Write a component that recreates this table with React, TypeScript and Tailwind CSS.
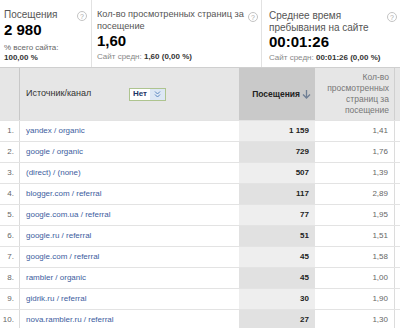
import React from "react";

const rows = [
  { source: "yandex / organic", visits: "1 159", pages: "1,41" },
  { source: "google / organic", visits: "729", pages: "1,76" },
  { source: "(direct) / (none)", visits: "507", pages: "1,39" },
  { source: "blogger.com / referral", visits: "117", pages: "2,89" },
  { source: "google.com.ua / referral", visits: "77", pages: "1,95" },
  { source: "google.ru / referral", visits: "51", pages: "1,51" },
  { source: "google.com / referral", visits: "45", pages: "1,58" },
  { source: "rambler / organic", visits: "45", pages: "1,00" },
  { source: "gidrik.ru / referral", visits: "30", pages: "1,90" },
  { source: "nova.rambler.ru / referral", visits: "27", pages: "1,30" },
];

function Help() {
  return (
    <span className="flex h-[10px] w-[10px] shrink-0 items-center justify-center rounded-full border border-[#c4c4c4] text-[7px] leading-none text-[#aaa]">
      ?
    </span>
  );
}

function Summary() {
  return (
    <div className="flex h-[68px] border-b border-[#cfcfcf] bg-white text-[#444]">
      <div className="flex w-[92px] shrink-0 justify-between border-r border-[#e2e2e2] pl-[4px] pr-[4px] pt-[9px]">
        <div>
          <div className="text-[10px] leading-[12px] text-[#555]">Посещения</div>
          <div className="mt-[1px] text-[15px] font-bold leading-[16px] text-black">2 980</div>
          <div className="mt-[5px] text-[8px] leading-[10px] text-[#666]">% всего сайта:</div>
          <div className="text-[8px] font-bold leading-[10px] text-[#333]">100,00 %</div>
        </div>
        <div className="pt-[2px]">
          <Help />
        </div>
      </div>
      <div className="relative w-[170px] shrink-0 border-r border-[#e2e2e2] pl-[5px] pt-[8px]">
        <div className="whitespace-nowrap text-[9.2px] leading-[12px] text-[#555]">
          Кол-во просмотренных страниц за
          <br />
          посещение
        </div>
        <div className="mt-[1px] text-[15px] font-bold leading-[16px] text-black">1,60</div>
        <div className="mt-[3px] whitespace-nowrap text-[8px] leading-[10px] text-[#888]">
          Сайт средн: <span className="font-bold text-[#333]">1,60 (0,00 %)</span>
        </div>
        <div className="absolute right-[3px] top-[12px]">
          <Help />
        </div>
      </div>
      <div className="relative flex-1 pl-[7px] pt-[10px]">
        <div className="text-[10px] leading-[12px] text-[#555]">
          Среднее время
          <br />
          пребывания на сайте
        </div>
        <div className="text-[15px] font-bold leading-[16px] text-black">00:01:26</div>
        <div className="mt-[3px] whitespace-nowrap text-[8px] leading-[10px] text-[#888]">
          Сайт средн: <span className="font-bold text-[#333]">00:01:26 (0,00 %)</span>
        </div>
        <div className="absolute right-[3px] top-[12px]">
          <Help />
        </div>
      </div>
    </div>
  );
}

function TableHeader() {
  return (
    <div className="flex h-[52px] bg-[#e6e6e6] text-[9px]">
      <div className="w-[20px] shrink-0 border-r border-[#c8c8c8]" />
      <div className="flex flex-1 items-center pl-[6px] text-[#333]">
        <span className="w-[103px] shrink-0 whitespace-nowrap">Источник/канал</span>
        <span className="flex h-[13px] items-stretch border border-[#aec48f] bg-white">
          <span className="flex items-center px-[3px] text-[8px] font-bold text-[#1d3566]">Нет</span>
          <span className="flex w-[15px] items-center justify-center bg-[#dce7f4]">
            <svg width="7" height="8" viewBox="0 0 7 8" fill="none" stroke="#5a86c0" strokeWidth="1">
              <path d="M1 1.5 L3.5 4 L6 1.5" />
              <path d="M1 4.5 L3.5 7 L6 4.5" />
            </svg>
          </span>
        </span>
      </div>
      <div className="flex w-[76px] shrink-0 items-center justify-end bg-[#c9c9c9] pr-[4px] text-[8.5px] font-bold text-[#222]">
        Посещения
        <svg className="ml-[2px]" width="9" height="10" viewBox="0 0 9 10" fill="none" stroke="#6f7f95" strokeWidth="1.3">
          <path d="M4.5 1 V8.5" />
          <path d="M1 5.5 L4.5 9 L8 5.5" />
        </svg>
      </div>
      <div className="flex w-[80px] shrink-0 items-center justify-end border-r border-[#d0d0d0] pr-[5px] text-right text-[8.5px] leading-[11px] text-[#777]">
        <div>
          Кол-во
          <br />
          просмотренных
          <br />
          страниц за
          <br />
          посещение
        </div>
      </div>
      <div className="w-[5px] shrink-0" />
    </div>
  );
}

export default function App() {
  return (
    <div className="h-[328px] w-[400px] overflow-hidden bg-white" style={{ fontFamily: '"Liberation Sans", Arial, sans-serif' }}>
      <Summary />
      <TableHeader />
      {rows.map((row, i) => (
        <div key={i} className="flex h-[21px] border-t border-[#e3e3e3] text-[8px]">
          <div className="flex w-[20px] shrink-0 items-center justify-end border-r border-[#dcdcdc] pr-[5px] text-[#666]">
            {i + 1}.
          </div>
          <div className="flex flex-1 items-center pl-[6px] text-[#3d5d9e]">{row.source}</div>
          <div
            className={[
              "flex w-[76px] shrink-0 items-center justify-end pr-[6px] font-bold text-[#222]",
              i % 2 === 1 ? "bg-[#e1e1e1]" : "bg-[#eeeeee]",
            ].join(" ")}
          >
            {row.visits}
          </div>
          <div className="flex w-[80px] shrink-0 items-center justify-end border-r border-[#dcdcdc] pr-[6px] text-[#666]">
            {row.pages}
          </div>
          <div className="w-[5px] shrink-0" />
        </div>
      ))}
    </div>
  );
}
